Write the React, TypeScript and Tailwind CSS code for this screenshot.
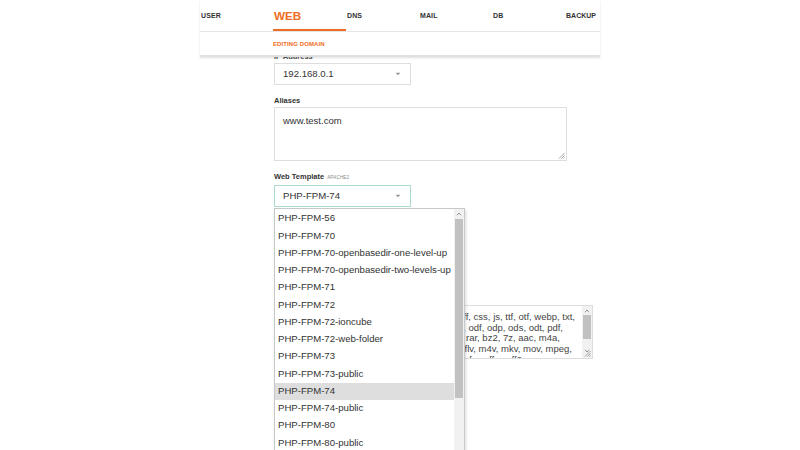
import React from "react";

const items = [
  "PHP-FPM-56",
  "PHP-FPM-70",
  "PHP-FPM-70-openbasedir-one-level-up",
  "PHP-FPM-70-openbasedir-two-levels-up",
  "PHP-FPM-71",
  "PHP-FPM-72",
  "PHP-FPM-72-ioncube",
  "PHP-FPM-72-web-folder",
  "PHP-FPM-73",
  "PHP-FPM-73-public",
  "PHP-FPM-74",
  "PHP-FPM-74-public",
  "PHP-FPM-80",
  "PHP-FPM-80-public",
];

const hiddenLines: [string, string][] = [
  ["jpeg, jpg, png, gif, bmp, ico, svg, tif, tiff, css, js, ttf, otf, webp, txt,", "pr-[7px]"],
  ["csv, rtf, doc, docx, xls, xlsx, ppt, pptx, odf, odp, ods, odt, pdf,", "pr-[19px]"],
  ["psd, ai, eot, eps, ps, zip, tar, tgz, gz, rar, bz2, 7z, aac, m4a,", "pr-[22px]"],
  ["mp3, mp4, ogg, wav, wma, 3gp, avi, flv, m4v, mkv, mov, mpeg,", "pr-[10px]"],
  ["mpg, wmv, exe, iso, dmg, swf, woff, woff2", "pr-[60px]"],
];

function Caret() {
  return (
    <svg width="6" height="4" viewBox="0 0 6 4" className="shrink-0">
      <path d="M0.5 0.8 L5.5 0.8 L3 3.3 Z" fill="#9a9a9a" />
    </svg>
  );
}

function Resize() {
  return (
    <svg width="7" height="7" viewBox="0 0 7 7" className="absolute right-[1px] bottom-[1px]">
      <path d="M6.5 1 L1 6.5 M6.5 3.5 L3.5 6.5 M6.5 5.5 L5.5 6.5" stroke="#8a8a8a" strokeWidth="0.8" />
    </svg>
  );
}

export default function App() {
  const navItem = "w-[73px] h-full flex items-center pl-px pt-[2px] text-[7px] font-bold text-[#333] tracking-[0.1px]";
  return (
    <div
      className="w-[800px] h-[450px] overflow-hidden bg-white text-[#333]"
      style={{ fontFamily: '"Liberation Sans", Arial, sans-serif' }}
    >
      <div className="w-[400px] mx-auto">
        {/* header */}
        <div className="relative z-10 bg-white border-b-2 border-[#e0e0e0] shadow-[0_1px_2px_rgba(0,0,0,0.12)]">
          <div className="h-[32px] flex border-b border-[#e6e6e6]">
            <div className={navItem}>USER</div>
            <div className="w-[73px] h-full flex items-center pl-[1px] pt-[2px] border-b-2 border-[#ef6c23] text-[11.7px] font-bold text-[#ef6c23]">
              WEB
            </div>
            <div className={navItem}>DNS</div>
            <div className={navItem}>MAIL</div>
            <div className={navItem}>DB</div>
            <div className="flex-1 h-full flex items-center justify-end pr-[4px] pt-[2px] text-[7px] font-bold text-[#333]">BACKUP</div>
          </div>
          <div className="h-[23px] flex items-center pl-[73px] pt-[1px] text-[6px] font-bold text-[#ef6c23] tracking-[0.1px]">
            EDITING DOMAIN
          </div>
        </div>

        {/* content */}
        <div className="-mt-[5px] pl-[74px] relative">
          <div className="h-[10px] leading-[10px] text-[7.5px] font-bold text-[#555]">IP Address</div>
          <div className="mt-[1px] w-[137px] h-[22px] border border-[#dedede] flex items-center justify-between pl-[8px] pr-[9px] text-[9.6px] text-[#333]">
            <span>192.168.0.1</span>
            <Caret />
          </div>

          <div className="mt-[11px] h-[10px] leading-[10px] text-[7.5px] font-bold text-[#333]">Aliases</div>
          <div className="relative mt-[1px] w-[293px] h-[54px] border border-[#dedede] pl-[8px] pt-[6px] text-[9.5px] text-[#333]">
            www.test.com
            <Resize />
          </div>

          <div className="mt-[11px] h-[10px] leading-[10px] flex items-baseline gap-[3px]">
            <span className="text-[7.5px] font-bold text-[#333]">Web Template</span>
            <span className="text-[4.5px] text-[#888] tracking-[0.2px]">APACHE2</span>
          </div>
          <div className="relative mt-[3px] w-[137px]">
            <div className="h-[22px] border border-[#acdcd0] flex items-center justify-between pl-[8px] pr-[9px] text-[9.6px] text-[#333]">
              <span>PHP-FPM-74</span>
              <Caret />
            </div>
            {/* dropdown */}
            <div className="absolute left-0 top-[23px] z-20 w-[191px] h-[260px] bg-white border border-[#c8c8c8] shadow-[1px_2px_3px_rgba(0,0,0,0.15)] flex">
              <div className="flex-1 pt-[1px]">
                {items.map((t) => (
                  <div
                    key={t}
                    className={
                      "h-[17.25px] flex items-center pl-[3px] text-[9.6px] text-[#333] whitespace-nowrap " +
                      (t === "PHP-FPM-74" ? "bg-[#dedede]" : "")
                    }
                  >
                    {t}
                  </div>
                ))}
              </div>
              <div className="w-[10px] bg-[#f1f1f1] flex flex-col items-center">
                <div className="h-[10px] flex items-center justify-center">
                  <svg width="6" height="4" viewBox="0 0 6 4">
                    <path d="M1 3.2 L3 1 L5 3.2" stroke="#8a8a8a" strokeWidth="0.9" fill="none" />
                  </svg>
                </div>
                <div className="w-[8px] h-[179px] bg-[#c1c1c1]" />
              </div>
            </div>
          </div>

          {/* textarea behind dropdown */}
          <div className="relative mt-[98px] w-[319px] h-[54px] border border-[#dedede] flex">
            <div className="flex-1 ml-[190px] pt-[6px] text-[9.5px] leading-[10.7px] text-[#444] overflow-hidden">
              {hiddenLines.map(([t, pr]) => (
                <div key={t} className={"flex justify-end whitespace-nowrap " + pr}>
                  <span className="shrink-0">{t}</span>
                </div>
              ))}
            </div>
            <div className="w-[10px] bg-[#f1f1f1] flex flex-col items-center">
              <div className="h-[9px] flex items-center justify-center">
                <svg width="6" height="4" viewBox="0 0 6 4">
                  <path d="M1 3.2 L3 1 L5 3.2" stroke="#8a8a8a" strokeWidth="0.9" fill="none" />
                </svg>
              </div>
              <div className="w-[8px] h-[24px] bg-[#c1c1c1]" />
              <div className="flex-1" />
              <div className="h-[9px] flex items-start justify-center">
                <svg width="6" height="4" viewBox="0 0 6 4">
                  <path d="M1 0.8 L3 3 L5 0.8" stroke="#8a8a8a" strokeWidth="0.9" fill="none" />
                </svg>
              </div>
            </div>
            <Resize />
          </div>
        </div>
      </div>
    </div>
  );
}
